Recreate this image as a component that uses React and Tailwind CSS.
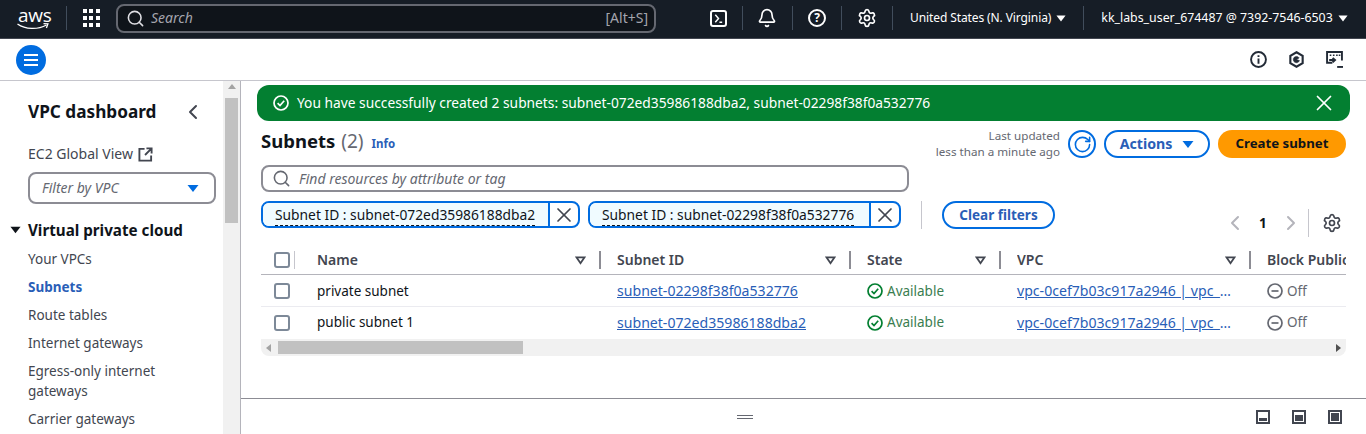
import { Search, Bell, Settings, X, RotateCw, ChevronLeft, ChevronRight } from "lucide-react";

const navItems = ["Your VPCs", "Subnets", "Route tables", "Internet gateways", "Egress-only internet gateways", "Carrier gateways"];

const rows = [
  { name: "private subnet", id: "subnet-02298f38f0a532776" },
  { name: "public subnet 1", id: "subnet-072ed35986188dba2" },
];

function Caret({ className }) {
  return (
    <svg viewBox="0 0 12 8" className={className} fill="currentColor">
      <path d="M0.5 0.5h11L6 7.5z" />
    </svg>
  );
}

function SortIcon() {
  return (
    <svg viewBox="0 0 12 10" className="w-[11px] h-[9px] text-[#424650]" fill="none" stroke="currentColor" strokeWidth="2">
      <path d="M1.500 1.500h9L6 8z" />
    </svg>
  );
}

function Check() {
  return <span className="block w-4 h-4 rounded-[3px] border-2 border-[#7d8998] bg-white" />;
}

function Divider() {
  return <span className="block w-px h-6 bg-[#414d5c]" />;
}

function OkIcon({ className }) {
  return (
    <svg viewBox="0 0 16 16" className={className} fill="none" stroke="currentColor" strokeWidth="1.7">
      <circle cx="8" cy="8" r="7" />
      <path d="M4.600 8.200l2.400 2.400 4.200-4.800" />
    </svg>
  );
}

function FilterChip({ label, width }) {
  return (
    <div className={`flex h-[27px] rounded-lg border-2 border-[#006ce0] overflow-hidden ${width}`}>
      <div className="flex-1 bg-[#f0fbff] pl-[12px] text-[13.8px] leading-[24px] text-[#0f141a] whitespace-nowrap">
        <span className="border-b border-dashed border-[#0f141a] pb-[1px]">Subnet ID : {label}</span>
      </div>
      <div className="w-[30px] flex items-center justify-center border-l-2 border-[#006ce0] text-[#424650]">
        <X size={24} strokeWidth={1.7} />
      </div>
    </div>
  );
}

function HeaderCell({ label, width }) {
  return (
    <div className={`flex items-center shrink-0 pl-4 pr-[13px] ${width}`}>
      <span className="flex-1 text-sm font-semibold text-[#424650] whitespace-nowrap overflow-hidden">{label}</span>
      <SortIcon />
      <span className="ml-[13px] -mr-[13px] w-[2px] h-[18px] bg-[#8c8c94]" />
    </div>
  );
}

function PanelSize({ bar }) {
  return (
    <span className="w-[14px] h-[14px] border-2 border-[#424650] p-px flex items-end">
      <span className={`w-full bg-[#424650] ${bar}`} />
    </span>
  );
}

export default function App() {
  return (
    <div className="w-[1366px] h-[434px] overflow-hidden bg-white flex flex-col font-['Noto_Sans',sans-serif] text-[#0f141a]">
      <header className="h-[39px] shrink-0 bg-[#161d26] border-b border-[#424650] flex items-center pb-[2px] text-white">
        <div className="w-[66px] shrink-0 pl-[17px] flex flex-col items-start pt-[2px]">
          <span className="text-[19px] leading-[16px] font-['Open_Sans',sans-serif] tracking-[-0.3px] pl-px">aws</span>
          <svg viewBox="0 0 32 9" className="w-[32px] h-[9px]" fill="none" stroke="white" strokeWidth="1.3">
            <path d="M0.500 1c8 5.500 20 6 29 1" />
            <path d="M26.500 0.700l4.400 0.200-1.500 4" />
          </svg>
        </div>
        <Divider />
        <div className="ml-4 grid grid-cols-3 gap-[3px] w-4 shrink-0">
          {Array.from({ length: 9 }).map((_, i) => (
            <span key={i} className="w-[4px] h-[4px] bg-white" />
          ))}
        </div>
        <div className="ml-[17px] w-[540px] h-[29px] rounded-lg border-2 border-[#656871] bg-[#0f141a] flex items-center pl-[8px] pr-[6px]">
          <Search size={19} strokeWidth={2} className="text-[#dedee3]" />
          <span className="ml-[6px] flex-1 text-sm italic text-[#a4a4ad]">Search</span>
          <span className="text-sm text-[#a4a4ad]">[Alt+S]</span>
        </div>
        <div className="ml-[54px] flex items-center">
          <span className="w-[17px] h-[17px] rounded-[3px] border-2 border-white flex items-center justify-center">
            <svg viewBox="0 0 12 12" className="w-[11px] h-[11px]" fill="none" stroke="white" strokeWidth="1.600">
              <path d="M2.500 2l3.500 4-3.500 4M7 10h3" />
            </svg>
          </span>
          <span className="ml-[15px]"><Divider /></span>
          <Bell size={20} strokeWidth={2} className="ml-[14px]" />
          <span className="ml-[15px]"><Divider /></span>
          <span className="ml-[15px] w-[18px] h-[18px] rounded-full border-2 border-white flex items-center justify-center text-[12px] font-bold leading-none">?</span>
          <span className="ml-[15px]"><Divider /></span>
          <Settings size={20} strokeWidth={2} className="ml-[15px]" />
          <span className="ml-[15px]"><Divider /></span>
          <span className="ml-[17px] text-[12px] tracking-[-0.1px] whitespace-nowrap">United States (N. Virginia)</span>
          <Caret className="ml-[5px] w-[10px] h-[7px]" />
          <span className="ml-[17px]"><Divider /></span>
          <span className="ml-[17px] text-[12.350px] whitespace-nowrap">kk_labs_user_674487 @ 7392-7546-6503</span>
          <Caret className="ml-[5px] w-[10px] h-[7px]" />
        </div>
      </header>

      <div className="h-[42px] shrink-0 border-b border-[#c6c6cd] flex items-center pl-4 pr-[23px]">
        <span className="w-[30px] h-[30px] rounded-full bg-[#006ce0] flex flex-col items-center justify-center gap-[3px]">
          <span className="w-[14px] h-[2px] bg-white" />
          <span className="w-[14px] h-[2px] bg-white" />
          <span className="w-[14px] h-[2px] bg-white" />
        </span>
        <div className="ml-auto flex items-center gap-[21px] text-[#232b37]">
          <svg viewBox="0 0 16 16" className="w-[17px] h-[17px]" fill="none" stroke="currentColor" strokeWidth="1.800">
            <circle cx="8" cy="8" r="7" />
            <path d="M8 7v5M8 4v1.600" />
          </svg>
          <svg viewBox="0 0 16 16" className="w-[17px] h-[17px]" fill="none" stroke="currentColor" strokeWidth="2">
            <path d="M8 1.200l5.800 3.300v7L8 14.800l-5.800-3.300v-7z" />
            <path d="M10.500 6.500A3 3 0 1 0 10.800 9L8 8z" fill="currentColor" strokeWidth="0.500" />
          </svg>
          <svg viewBox="0 0 16 16" className="w-[17px] h-[17px]" fill="none" stroke="currentColor" strokeWidth="1.800">
            <path d="M6 11H1V1h14v8" />
            <path d="M3.500 4h1.500M6.500 4h1.500M9.500 4h1.500M12 4h1.500" strokeWidth="1.500" />
            <path d="M3 8.500h5M6.200 6.500l2.300 2-2.300 2" />
            <path d="M10.500 15H16" />
          </svg>
        </div>
      </div>

      <div className="flex-1 flex min-h-0">
        <aside className="w-[241px] shrink-0 border-r border-[#b4b4bb] flex">
          <nav className="w-[223px] shrink-0 overflow-hidden pt-[19px]">
            <div className="flex items-center pl-[28px] pr-[18px] h-[24px]">
              <h2 className="flex-1 text-[17.2px] font-bold leading-[24px] whitespace-nowrap">VPC dashboard</h2>
              <ChevronLeft size={24} strokeWidth={2} className="text-[#424650]" />
            </div>
            <div className="mt-[19px] pl-[28px] flex items-center text-sm text-[#424650] h-[22px]">
              EC2 Global View
              <svg viewBox="0 0 16 16" className="ml-[5px] w-[15px] h-[15px]" fill="none" stroke="currentColor" strokeWidth="2">
                <path d="M7 2H1.500v12.500H14V9M9 1.500h5.500V7M14 2L7.500 8.500" />
              </svg>
            </div>
            <div className="ml-[28px] mt-[7px] w-[188px] h-[32px] rounded-lg border-2 border-[#8c8c94] flex items-center pl-[12px] pr-[15px]">
              <span className="flex-1 text-sm italic text-[#656871]">Filter by VPC</span>
              <Caret className="w-[12px] h-[9px] text-[#006ce0]" />
            </div>
            <div className="mt-[14px] flex items-center pl-[10px] h-[24px]">
              <Caret className="w-[11px] h-[8px] text-[#0f141a]" />
              <span className="ml-[7px] text-[15.200px] font-bold whitespace-nowrap">Virtual private cloud</span>
            </div>
            <ul className="mt-[7px] pl-[28px] pr-[50px] flex flex-col gap-[8px] text-[13.500px] leading-[20px] text-[#424650]">
              {navItems.map((item) => (
                <li key={item} className={item === "Subnets" ? "font-bold text-[#295eb7]" : ""}>
                  {item}
                </li>
              ))}
            </ul>
          </nav>
          <div className="w-[17px] shrink-0 bg-[#f1f1f1] flex flex-col items-center">
            <svg viewBox="0 0 8 5" className="w-2 h-[5px] mt-[3px] text-[#a3a3a3]" fill="currentColor">
              <path d="M4 0l4 5H0z" />
            </svg>
            <span className="w-[13px] h-[125px] mt-[9px] bg-[#c1c1c1]" />
          </div>
        </aside>

        <main className="flex-1 min-w-0 flex flex-col">
          <div className="flex-1 min-h-0 px-4 pt-1">
            <div className="h-[36px] rounded-xl bg-[#037f31] text-white flex items-center pl-4 pr-[13px]">
              <OkIcon className="w-4 h-4" />
              <span className="ml-2 flex-1 text-[13.780px] whitespace-nowrap">
                You have successfully created 2 subnets: subnet-072ed35986188dba2, subnet-02298f38f0a532776
              </span>
              <X size={26} strokeWidth={1.600} />
            </div>

            <div className="mt-[7px] flex items-start pl-1 pr-1 h-[30px]">
              <div className="flex items-center h-[26px]">
                <h1 className="text-[18.500px] font-bold">Subnets</h1>
                <span className="ml-[6px] text-[19px] text-[#656871]">(2)</span>
                <span className="ml-[8px] mt-[5px] text-[11.500px] font-bold text-[#295eb7]">Info</span>
              </div>
              <div className="ml-auto flex items-center">
                <div className="text-right text-[11.650px] leading-[16px] text-[#656871]">
                  <div>Last updated</div>
                  <div>less than a minute ago</div>
                </div>
                <span className="ml-2 w-[28px] h-[28px] rounded-full border-2 border-[#006ce0] flex items-center justify-center text-[#006ce0]">
                  <RotateCw size={19} strokeWidth={2} />
                </span>
                <span className="ml-2 w-[106px] h-[28px] rounded-full border-2 border-[#006ce0] flex items-center justify-center text-[14.200px] font-bold text-[#295eb7]">
                  Actions
                  <Caret className="ml-[10px] w-[12px] h-[9px] text-[#006ce0]" />
                </span>
                <span className="ml-2 w-[128px] h-[28px] rounded-full bg-[#ff9900] flex items-center justify-center text-[13.250px] font-bold text-[#0f141a] whitespace-nowrap">
                  Create subnet
                </span>
              </div>
            </div>

            <div className="ml-1 mt-[7px] w-[648px] h-[27px] rounded-lg border-2 border-[#8c8c94] flex items-center pl-[9px]">
              <Search size={19} strokeWidth={2} className="text-[#656871]" />
              <span className="ml-[8px] text-sm italic text-[#656871]">Find resources by attribute or tag</span>
            </div>

            <div className="mt-[9px] ml-1 flex items-start pr-[8px]">
              <FilterChip label="subnet-072ed35986188dba2" width="w-[319px]" />
              <span className="ml-2"><FilterChip label="subnet-02298f38f0a532776" width="w-[313px]" /></span>
              <span className="ml-[20px] w-px h-[28px] bg-[#c6c6cd]" />
              <span className="ml-[20px] w-[113px] h-[28px] rounded-full border-2 border-[#006ce0] flex items-center justify-center text-[13.500px] font-bold text-[#295eb7]">
                Clear filters
              </span>
              <div className="ml-auto mt-[8px] flex items-center text-[#b4b4bb]">
                <ChevronLeft size={24} strokeWidth={2} />
                <span className="ml-[12px] w-[8px] text-[13.500px] font-bold text-[#0f141a]">1</span>
                <ChevronRight size={24} strokeWidth={2} className="ml-[12px]" />
                <span className="ml-[5px] w-px h-7 bg-[#c6c6cd]" />
                <Settings size={20} strokeWidth={2} className="ml-[13px] text-[#424650]" />
              </div>
            </div>

            <div className="mt-[6px] w-[1085px] ml-1 overflow-hidden">
              <div className="flex items-center h-[32px] pt-[3px] border-b border-[#b4b4bb] w-[1200px]">
                <div className="w-[40px] shrink-0 pl-[13px] flex items-center">
                  <Check />
                  <span className="ml-[4px] w-px h-[18px] bg-[#c6c6cd]" />
                </div>
                <HeaderCell label="Name" width="w-[300px]" />
                <HeaderCell label="Subnet ID" width="w-[250px]" />
                <HeaderCell label="State" width="w-[150px]" />
                <HeaderCell label="VPC" width="w-[250px]" />
                <div className="pl-4 text-sm font-semibold text-[#424650] whitespace-nowrap">Block Public Access</div>
              </div>
              {rows.map((row, i) => (
                <div key={row.id} className={`flex items-center h-[32px] w-[1200px] text-[13.500px] ${i === 0 ? "pt-[1px] border-b border-[#ebebf0]" : "pb-[1px]"}`}>
                  <div className="w-[40px] shrink-0 pl-[13px]"><Check /></div>
                  <div className="w-[300px] shrink-0 pl-4">{row.name}</div>
                  <div className="w-[250px] shrink-0 pl-4 text-[14.100px] text-[#295eb7] underline">{row.id}</div>
                  <div className="w-[150px] shrink-0 pl-4 flex items-center text-[#037f31]">
                    <OkIcon className="w-4 h-4" />
                    <span className="ml-[4px] text-[#3a7d50]">Available</span>
                  </div>
                  <div className="w-[250px] shrink-0 pl-4 text-[14.100px] text-[#295eb7] whitespace-nowrap">
                    <span className="underline">vpc-0cef7b03c917a2946 | vpc_</span>…
                  </div>
                  <div className="pl-4 flex items-center text-[#656871]">
                    <svg viewBox="0 0 16 16" className="w-4 h-4" fill="none" stroke="currentColor" strokeWidth="1.700">
                      <circle cx="8" cy="8" r="7" />
                      <path d="M4.500 8h7" />
                    </svg>
                    <span className="ml-[4px]">Off</span>
                  </div>
                </div>
              ))}
              <div className="h-[17px] bg-[#f1f1f1] rounded-b-lg flex items-center">
                <svg viewBox="0 0 5 8" className="ml-[5px] w-[5px] h-2 text-[#a3a3a3]" fill="currentColor">
                  <path d="M5 0v8L0 4z" />
                </svg>
                <span className="ml-[7px] w-[245px] h-[13px] bg-[#c1c1c1]" />
                <svg viewBox="0 0 5 8" className="ml-auto mr-[5px] w-[5px] h-2 text-[#505050]" fill="currentColor">
                  <path d="M0 0v8l5-4z" />
                </svg>
              </div>
            </div>
          </div>

          <div className="h-[36px] shrink-0 border-t border-[#8c8c94] flex items-center pr-[24px]">
            <div className="flex-1 flex flex-col items-center gap-[2px] pr-[8px]">
              <span className="w-4 h-px bg-[#656871]" />
              <span className="w-4 h-px bg-[#656871]" />
            </div>
            <div className="flex items-center gap-[22px]">
              <PanelSize bar="h-[3px]" />
              <PanelSize bar="h-[6px]" />
              <PanelSize bar="h-full" />
            </div>
          </div>
        </main>
      </div>
    </div>
  );
}
